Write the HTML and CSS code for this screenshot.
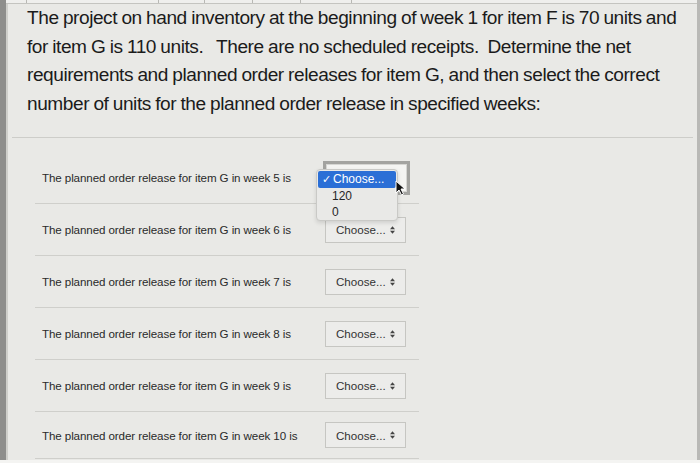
FILE: index.html
```html
<!DOCTYPE html>
<html>
<head>
<meta charset="utf-8">
<link rel="stylesheet" href="styles.css">
</head>
<body>
<div class="screen">
  <div class="topstrip">
    <span class="cell c1"></span><span class="cell c2"></span><span class="cell c3"></span><span class="cell c4"></span><span class="cell c5"></span><span class="cell c6"></span>
  </div>
  <p class="question">The project on hand inventory at the beginning of week 1 for item F is 70 units and<br>for item G is 110 units.&nbsp;&nbsp; There are no scheduled receipts.&nbsp; Determine the net<br>requirements and planned order releases for item G, and then select the correct<br>number of units for the planned order release in specified weeks:</p>
  <div class="rule"></div>
  <div class="answers">
    <div class="row">
      <span class="label">The planned order release for item G in week 5 is</span>
      <div class="select-wrap">
        <div class="select focused"></div>
        <div class="dropdown">
          <div class="opt active"><span class="check">✓</span>Choose...</div>
          <div class="opt">120</div>
          <div class="opt">0</div>
          <svg class="cursor" width="12" height="16" viewBox="0 0 12 16"><path d="M1 1 L1 13 L4 10 L6.5 15 L8.5 14 L6 9 L10 9 Z" fill="#111" stroke="#fff" stroke-width="1"/></svg>
        </div>
      </div>
    </div>
    <div class="row">
      <span class="label">The planned order release for item G in week 6 is</span>
      <div class="select"><span>Choose...</span><svg class="arrows" width="5" height="8" viewBox="0 0 6 9"><path d="M3 0 L6 3.5 L0 3.5 Z M3 9 L6 5.5 L0 5.5 Z" fill="#444"/></svg></div>
    </div>
    <div class="row">
      <span class="label">The planned order release for item G in week 7 is</span>
      <div class="select"><span>Choose...</span><svg class="arrows" width="5" height="8" viewBox="0 0 6 9"><path d="M3 0 L6 3.5 L0 3.5 Z M3 9 L6 5.5 L0 5.5 Z" fill="#444"/></svg></div>
    </div>
    <div class="row">
      <span class="label">The planned order release for item G in week 8 is</span>
      <div class="select"><span>Choose...</span><svg class="arrows" width="5" height="8" viewBox="0 0 6 9"><path d="M3 0 L6 3.5 L0 3.5 Z M3 9 L6 5.5 L0 5.5 Z" fill="#444"/></svg></div>
    </div>
    <div class="row">
      <span class="label">The planned order release for item G in week 9 is</span>
      <div class="select"><span>Choose...</span><svg class="arrows" width="5" height="8" viewBox="0 0 6 9"><path d="M3 0 L6 3.5 L0 3.5 Z M3 9 L6 5.5 L0 5.5 Z" fill="#444"/></svg></div>
    </div>
    <div class="row last">
      <span class="label">The planned order release for item G in week 10 is</span>
      <div class="select"><span>Choose...</span><svg class="arrows" width="5" height="8" viewBox="0 0 6 9"><path d="M3 0 L6 3.5 L0 3.5 Z M3 9 L6 5.5 L0 5.5 Z" fill="#444"/></svg></div>
    </div>
  </div>
</div>
</body>
</html>
```
FILE: styles.css
```css
html, body {
  margin: 0;
  padding: 0;
  background: #f4f4f2;
}
.screen {
  width: 700px;
  height: 460px;
  box-sizing: border-box;
  background: #e9e9e6;
  border-left: 6px solid #8e8e8c;
  border-right: 3px solid #b9b9b6;
  box-shadow: inset 2px 0 0 #cfcfcb;
  font-family: "Liberation Sans", Arial, sans-serif;
  color: #1c1c1c;
  overflow: hidden;
}
.topstrip {
  height: 3px;
  display: flex;
  border-bottom: 1px solid #c4c4c0;
  background: #efefed;
}
.cell {
  height: 3px;
  border-right: 1px solid #b8b8b4;
}
.c1 { width: 20px; }
.c2 { width: 131px; }
.c3 { width: 45px; }
.c4 { width: 47px; }
.c5 { width: 47px; }
.c6 { width: 50px; }
.question {
  margin: 0;
  padding: 0 0 0 21px;
  font-size: 19.1px;
  line-height: 28.5px;
  letter-spacing: -0.45px;
  word-spacing: -0.5px;
  white-space: nowrap;
  color: #1b1b1b;
}
.rule {
  margin: 19px 4px 0 6px;
  border-top: 1px solid #cdcdc9;
}
.answers {
  margin: 14px 0 0 29px;
  width: 384px;
}
.row {
  height: 52px;
  box-sizing: border-box;
  border-bottom: 1px solid #cfcfcb;
  display: flex;
  align-items: center;
}
.row.last {
  height: 47px;
}
.label {
  flex: 0 0 283px;
  padding-left: 7px;
  font-size: 11.6px;
  color: #2a2a2a;
  letter-spacing: -0.1px;
}
.select {
  width: 81px;
  height: 26px;
  box-sizing: border-box;
  border: 1px solid #c6c6c2;
  background: #ececea;
  display: flex;
  align-items: center;
  justify-content: space-between;
  padding: 0 10px 0 10px;
  font-size: 11.6px;
  color: #333;
}
.arrows {
  display: block;
}
.select-wrap {
  position: relative;
  width: 81px;
  height: 26px;
}
.select.focused {
  position: absolute;
  left: -2px;
  top: -4px;
  width: 87px;
  height: 34px;
  background: #f4f4f2;
  border: 3px solid #a3a3a0;
  box-shadow: inset 0 0 0 1px #d6d6d3;
  padding: 0;
}
.dropdown {
  position: absolute;
  left: -9px;
  top: 4px;
  width: 82px;
  height: 52px;
  box-sizing: border-box;
  background: #e9e9e7;
  border: 1px solid #c9c9c6;
  border-radius: 4px;
  box-shadow: 0 2px 4px rgba(0,0,0,0.12);
  padding-top: 1px;
  font-size: 12px;
  color: #262626;
}
.opt {
  height: 16px;
  line-height: 16px;
  padding-left: 15px;
}
.opt.active {
  margin: 0 1px;
  height: 17px;
  line-height: 17px;
  padding-left: 4px;
  background: #2b6fd6;
  color: #fff;
  border-radius: 2px;
}
.check {
  display: inline-block;
  width: 11px;
  font-size: 11px;
}
.cursor {
  position: absolute;
  left: 78px;
  top: 10px;
}
```
